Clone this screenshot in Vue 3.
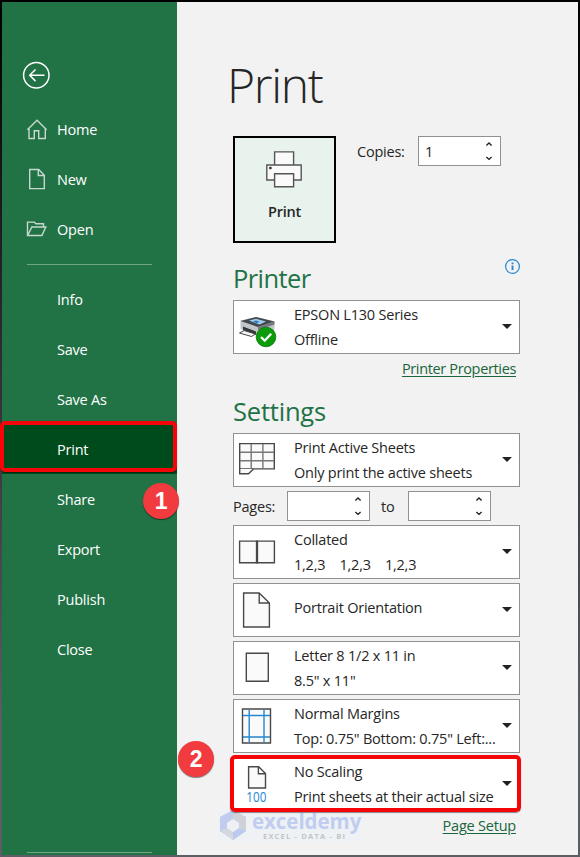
<script setup>
import { ref } from 'vue'

const copies = ref('1')

const topItems = [
    { id: 'home', label: 'Home' },
    { id: 'new', label: 'New' },
    { id: 'open', label: 'Open' }
]

const menuItems = ['Info', 'Save', 'Save As', 'Print', 'Share', 'Export', 'Publish', 'Close']
const active = ref('Print')

const layoutOptions = [
    { id: 'collated', title: 'Collated', detail: '1,2,3    1,2,3    1,2,3' },
    { id: 'portrait', title: 'Portrait Orientation' },
    { id: 'paper', title: 'Letter 8 1/2 x 11 in', detail: '8.5" x 11"' },
    { id: 'margins', title: 'Normal Margins', detail: 'Top: 0.75" Bottom: 0.75" Left:...' },
    { id: 'scaling', title: 'No Scaling', detail: 'Print sheets at their actual size' }
]
</script>

<template>
    <div class="window">
        <aside class="sidebar">
            <button class="back" aria-label="Back">
                <svg width="28" height="28" viewBox="0 0 28 28" fill="none" stroke="#fff" stroke-width="1.5">
                    <circle cx="14.3" cy="14.3" r="12.7" />
                    <path d="M22.5 14.3H7.7M13.5 8.5l-5.8 5.8 5.8 5.8" />
                </svg>
            </button>

            <nav>
                <a v-for="item in topItems" :key="item.id" class="nav-item with-icon">
                    <svg width="22" height="22" viewBox="0 0 22 22" fill="none" stroke="#c9d8ce" stroke-width="1.4">
                        <path v-if="item.id === 'home'"
                            d="M1.4 11.8L11 2.2l9.6 9.6M3 10.5v10h5.3v-7.7h4.4v7.7H19.3v-10" />
                        <path v-else-if="item.id === 'new'" d="M3.7 1.5h9l5.6 5.8v13.3H3.7zM12.3 1.5v6h6" />
                        <path v-else
                            d="M1.5 17.5V4.1h6.8l1.5 1.6h7.7v3M1.7 17.5L5.8 9h14l-3.9 8.5z" />
                    </svg>
                    <span>{{ item.label }}</span>
                </a>
                <div class="divider"></div>
                <a v-for="label in menuItems" :key="label" class="nav-item" :class="{ active: label === active }">
                    {{ label }}
                    <i v-if="label === active" class="highlight"></i>
                </a>
            </nav>
            <div class="divider bottom"></div>
            <span class="badge step-one">1</span>
        </aside>

        <main class="content">
            <h1>Print</h1>

            <div class="print-row">
                <button class="print-button">
                    <svg width="36" height="37" viewBox="0 0 36 37" fill="#fafafa" stroke="#555"
                        stroke-width="1.4">
                        <path d="M8.6 .9h19v13h-19zM.8 14h34.4v15H.8z" />
                        <path d="M8.6 22.8h19v13h-19z" />
                        <path d="M3.2 15.8h2.4v2.4H3.2z" fill="#333" stroke="none" />
                    </svg>
                    <span>Print</span>
                </button>
                <label class="copies">Copies:</label>
                <div class="spinner">
                    <span>{{ copies }}</span>
                    <svg width="8" height="20" viewBox="0 0 8 20" fill="none" stroke="#222" stroke-width="1.4">
                        <path d="M1.4 4.4L4 2l2.6 2.4M1.4 16L4 18.4 6.6 16" />
                    </svg>
                </div>
            </div>

            <div class="heading-row">
                <h2>Printer</h2>
                <svg class="info" width="16" height="16" viewBox="0 0 16 16" fill="none" stroke="#2587d0">
                    <circle cx="8.5" cy="8.5" r="6.9" stroke-width="1.2" />
                    <path d="M8.5 4.5v1.8M8.5 7.5v4.6" stroke-width="1.9" />
                </svg>
            </div>
            <div class="select">
                <svg class="icon" width="48" height="50" viewBox="0 0 48 50">
                    <path d="M6.5 18.5L22 15l18.5 4.5v9L24 34 6.5 27z" fill="#c3c6c8" />
                    <path d="M6.5 19L22 15l18.5 4.5L24 25z" fill="#43484d" />
                    <path d="M15 18.5l7-1.8 10 2.8-6.5 3z" fill="#9fcdec" />
                    <path d="M19 19.2l3-.8 3.5 1.3-3 1.5z" fill="#2679c4" />
                    <path d="M24 25l16.5-5.5v3L24 28z" fill="#74797d" />
                    <path d="M9 24.5l13 5V33L9 28z" fill="#34383c" />
                    <path d="M10 28.5L5.5 31l12 3.5 4-2.5z" fill="#f7f7f7" stroke="#444" />
                    <circle cx="32" cy="35" r="9.8" fill="#0a9c0a" stroke="#087508" stroke-width=".8" />
                    <path d="M27 35l3.7 3.7 6.5-7" fill="none" stroke="#fff" stroke-width="2.3" />
                </svg>
                <div class="lines">
                    <span>EPSON L130 Series</span>
                    <span>Offline</span>
                </div>
                <i class="caret"></i>
            </div>
            <a class="link properties">Printer Properties</a>

            <h2 class="settings-title">Settings</h2>
            <div class="select">
                <svg class="icon" width="48" height="50" viewBox="0 0 48 50" fill="#fafafa" stroke="#484848"
                    stroke-width="1.4">
                    <path d="M5.7 8.6h34.6v25.3H5.7z" />
                    <path d="M6 17.3h34M6 25.7h34M17.2 9v25M28.9 9v25" stroke="#777" />
                    <path d="M5.7 33.9v4.8h8.8l5-4.8" />
                </svg>
                <div class="lines">
                    <span>Print Active Sheets</span>
                    <span>Only print the active sheets</span>
                </div>
                <i class="caret"></i>
            </div>

            <div class="pages-row">
                <label>Pages:</label>
                <div class="spinner">
                    <span></span>
                    <svg width="8" height="20" viewBox="0 0 8 20" fill="none" stroke="#222" stroke-width="1.4">
                        <path d="M1.4 4.4L4 2l2.6 2.4M1.4 16L4 18.4 6.6 16" />
                    </svg>
                </div>
                <label class="to">to</label>
                <div class="spinner">
                    <span></span>
                    <svg width="8" height="20" viewBox="0 0 8 20" fill="none" stroke="#222" stroke-width="1.4">
                        <path d="M1.4 4.4L4 2l2.6 2.4M1.4 16L4 18.4 6.6 16" />
                    </svg>
                </div>
            </div>

            <div class="options">
                <div v-for="option in layoutOptions" :key="option.id" class="select" :class="option.id">
                    <svg class="icon" width="48" height="50" viewBox="0 0 48 50" fill="#fafafa" stroke="#484848"
                        stroke-width="1.4">
                        <template v-if="option.id === 'collated'">
                            <path d="M5.6 14.1h34.8v21.6H5.6z" />
                            <path d="M23 13.5v23" stroke-width="2.3" />
                        </template>
                        <path v-else-if="option.id === 'portrait'"
                            d="M9.6 8h15.6l10.2 10v24H9.6zM25.2 8v10h10.2" />
                        <path v-else-if="option.id === 'paper'" d="M12.3 10.3h22v28h-22z" />
                        <template v-else-if="option.id === 'margins'">
                            <path d="M8.5 8h28v34h-28z" />
                            <path d="M15.2 8.5v33M30 8.5v33M9 14.5h27M9 36h27" stroke="#2587d0" />
                        </template>
                        <template v-else>
                            <path d="M14.6 7.7h10.1l6.8 6.8V29H14.6zM24.4 7.7v7.1h7.1" />
                            <text x="12.3" y="42.5" textLength="20" lengthAdjust="spacingAndGlyphs">100</text>
                        </template>
                    </svg>
                    <div class="lines">
                        <span>{{ option.title }}</span>
                        <span v-if="option.detail">{{ option.detail }}</span>
                    </div>
                    <i class="caret"></i>
                    <i v-if="option.id === 'scaling'" class="highlight"></i>
                    <span v-if="option.id === 'scaling'" class="badge step-two">2</span>
                </div>
            </div>
            <a class="link setup">Page Setup</a>

            <div class="watermark">
                <svg width="28" height="30" viewBox="0 0 28 30">
                    <path d="M14 0l13 7v14l-13 9-13-9V7z" fill="#ccd4e4" />
                    <path d="M14 0v9l-6 4v8l-7 1V7z" fill="#c0cdf0" />
                    <path d="M14 0l13 7v14l-7-3v-6l-6-3z" fill="#ced2d8" />
                    <path d="M1 21l7-3 6 4v8z" fill="#d3d8df" />
                    <path d="M14 22l6-4 7 3-13 9z" fill="#bccaef" />
                    <path d="M14 9l6 4v5l-6 4-6-4v-5z" fill="#eef0f3" />
                </svg>
                <div>
                    <strong>exceldemy</strong>
                    <small>EXCEL - DATA - BI</small>
                </div>
            </div>
        </main>
    </div>
</template>

<style>
body {
    margin: 0;
}
</style>

<style scoped>
* {
    box-sizing: border-box;
}

.window {
    display: flex;
    width: 580px;
    height: 857px;
    padding: 2px;
    overflow: hidden;
    background: linear-gradient(#000, #202124 30%, #5b5e62 85%);
    color: #262626;
    font-family: "Open Sans", "Noto Sans", sans-serif;
    font-size: 14.5px;
    letter-spacing: -0.22px;
}

button {
    padding: 0;
    color: inherit;
    font: inherit;
    letter-spacing: inherit;
}

/* --- SIDEBAR --- */
.sidebar {
    position: relative;
    flex: none;
    width: 175px;
    background: #217346;
    color: #fff;
}

.back {
    display: block;
    height: 28px;
    margin: 59px 0 15px 20px;
    border: 0;
    background: none;
}

.nav-item {
    position: relative;
    display: flex;
    align-items: center;
    height: 50px;
    padding-left: 55px;
}

.with-icon {
    gap: 9px;
    padding-left: 24px;
}

.active {
    background: #004b1c;
}

.divider {
    height: 1px;
    margin: 7px 25px 12px;
    background: #6fa786;
}

.nav-item + .divider {
    margin-top: 10px;
    margin-bottom: 9px;
}

.divider.bottom {
    margin-top: 178px;
    margin-bottom: 0;
}

.highlight {
    position: absolute;
    inset: -3px 0 2px -2px;
    border: 4px solid #f50508;
    border-radius: 5px;
    box-shadow: 0 1px 1px rgba(0, 0, 0, 0.45);
}

.badge {
    position: absolute;
    z-index: 2;
    display: flex;
    align-items: center;
    justify-content: center;
    width: 36px;
    height: 36px;
    border-radius: 50%;
    background: #f23b3e;
    box-shadow: 0 1px 1px rgba(0, 0, 0, 0.5);
    color: #fff;
    font: bold 23px "Liberation Sans", Arial, sans-serif;
}

.step-one {
    top: 481px;
    left: 141px;
}

.step-two {
    top: -17px;
    left: -56px;
}

/* --- CONTENT --- */
.content {
    flex: 1;
    padding: 55px 58px 0 56px;
    background: #f2f2f2;
}

h1,
h2 {
    margin: 0;
    font-weight: 300;
}

h1 {
    height: 79px;
    margin-left: -6px;
    font-size: 48px;
    line-height: 56px;
    letter-spacing: -1.3px;
}

h2 {
    color: #217346;
    font-size: 25.5px;
    font-weight: 400;
    line-height: 35px;
    letter-spacing: -0.6px;
}

.print-row {
    display: flex;
    align-items: flex-start;
    height: 125px;
}

.print-button {
    display: flex;
    flex-direction: column;
    align-items: center;
    width: 103px;
    height: 107px;
    padding-top: 13px;
    border: 2px solid #000;
    background: #e9f3ed;
    font-weight: 600;
}

.print-button svg {
    margin-right: 1px;
}

.print-button span {
    margin-top: 13px;
    line-height: 22px;
}

.copies {
    width: 61px;
    margin-left: 21px;
    line-height: 31px;
}

.spinner {
    display: flex;
    align-items: center;
    justify-content: space-between;
    width: 83px;
    height: 30px;
    padding: 0 7px 0 6px;
    border: 1px solid #919191;
    background: #fff;
}

.heading-row {
    display: flex;
    justify-content: space-between;
    height: 39px;
}

.info {
    margin-top: -3px;
}

.select {
    position: relative;
    display: flex;
    align-items: center;
    height: 54px;
    border: 1px solid #919191;
    background: #fff;
}

.icon {
    flex: none;
    margin-right: 12px;
}

.lines {
    display: flex;
    flex: 1;
    flex-direction: column;
    line-height: 25px;
    white-space: pre;
}

.portrait .lines {
    margin-top: -6px;
}

.caret {
    position: absolute;
    top: 23px;
    right: 7px;
    border: 5px solid transparent;
    border-top-color: #222;
    border-bottom: 0;
}

.link {
    display: block;
    width: fit-content;
    margin-right: 4px;
    margin-left: auto;
    color: #19663b;
    line-height: 24px;
    text-decoration: underline;
    text-underline-offset: 2px;
}

.properties {
    margin-top: 3px;
    margin-bottom: 12px;
    letter-spacing: -0.35px;
}

.settings-title {
    height: 40px;
    line-height: 36px;
    letter-spacing: -0.2px;
}

.pages-row {
    display: flex;
    align-items: center;
    margin: 4px 0;
}

.pages-row label {
    width: 54px;
}

.pages-row .to {
    width: 38px;
    padding-left: 11px;
}

.options {
    display: flex;
    flex-direction: column;
    gap: 4px;
}

.scaling .highlight {
    inset: -3px -2px -2px -4px;
}

.icon text {
    fill: #2587d0;
    stroke: none;
    font-size: 15px;
    letter-spacing: 0;
}

.setup {
    margin-top: 3px;
}

/* --- WATERMARK --- */
.watermark {
    display: flex;
    gap: 5px;
    width: 143px;
    height: 32px;
    margin: -28px 0 0 -14px;
    background: rgba(236, 242, 246, 0.6);
    color: #c0cdf0;
}

.watermark strong,
.watermark small {
    display: block;
}

.watermark strong {
    font-size: 20.5px;
    line-height: 22px;
    letter-spacing: -0.05px;
}

.watermark small {
    margin-left: 11px;
    color: #c2c4c8;
    font-size: 7.5px;
    font-weight: 700;
    line-height: 8px;
    letter-spacing: 1.2px;
    white-space: nowrap;
}
</style>
